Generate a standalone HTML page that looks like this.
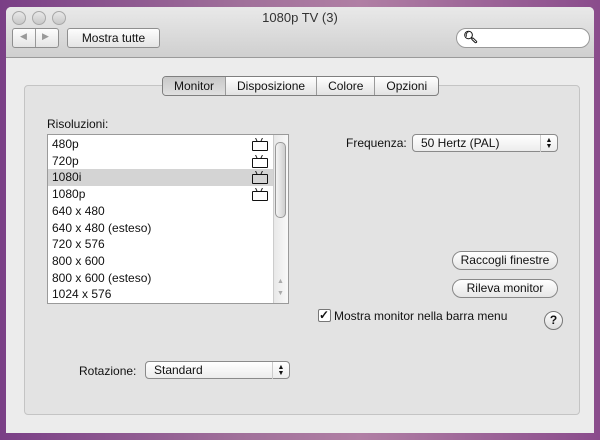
<!DOCTYPE html><html><head><style>
body{margin:0;width:600px;height:440px;overflow:hidden;font-family:"Liberation Sans",sans-serif;font-size:12px;color:#111;background:linear-gradient(90deg,#7a3f86 0%,#a0709a 40%,#b07fa4 60%,#8a4c8c 100%);position:relative}
.a{position:absolute}
.win{left:6px;top:7px;width:588px;height:426px;background:#ececec;border-radius:5px 5px 0 0;overflow:hidden}
.tb{left:0;top:0;width:588px;height:50px;background:linear-gradient(#e9e9e9,#cfcfcf);border-bottom:1px solid #9a9a9a}
.dot{width:12px;height:12px;border-radius:50%;border:1px solid #a8a8a8;background:linear-gradient(#e8e8e8,#c8c8c8);top:4px}
.btn{background:linear-gradient(#fdfdfd,#e4e4e4);border:1px solid #8f8f8f;border-radius:3px;text-align:center}
.pill{background:linear-gradient(#fff,#e6e6e6);border:1px solid #888;border-radius:10px;text-align:center;font-size:12px;line-height:17px}
.box{left:18px;top:78px;width:554px;height:328px;background:#e3e3e3;border:1px solid #c4c4c4;border-radius:4px}
.tabs{left:156px;top:69px;height:18px;border:1px solid #7f7f7f;border-radius:4px;display:flex;background:linear-gradient(#fff,#e2e2e2);overflow:hidden}
.tabs div{padding:0 11px;line-height:18px;border-left:1px solid #9a9a9a;font-size:12px}
.tabs div:first-child{border-left:0;background:linear-gradient(#c8c8c8,#e0e0e0)}
.list{left:22px;top:48px;width:240px;height:168px;background:#fff;border:1px solid #9a9a9a;overflow:hidden}
.row{position:absolute;left:0;width:222px;height:16.7px;line-height:17px;padding-left:4px;font-size:12px}
.tv{position:absolute;left:204px;top:5px;width:14px;height:8px;border:1.5px solid #111;border-radius:1px}
.tv:before{content:"";position:absolute;left:3px;top:-4px;width:2px;height:4px;border-left:1px solid #111;transform:skewX(25deg)}
.tv:after{content:"";position:absolute;left:8px;top:-4px;width:1px;height:4px;border-left:1px solid #111;transform:skewX(-25deg)}
.pop{background:linear-gradient(#fff,#ececec);border:1px solid #8a8a8a;border-radius:4px;height:18px;line-height:17px;font-size:12px;padding-left:8px;box-sizing:border-box}
.arr{position:absolute;right:0;top:0;width:16px;height:14px;border-left:1px solid #ccc;font-size:7px;line-height:6px;text-align:center;padding-top:3px}
</style></head><body>
<div class="a win">
 <div class="a tb">
  <div class="a dot" style="left:6px"></div><div class="a dot" style="left:26px"></div><div class="a dot" style="left:46px"></div>
  <div class="a" style="left:0;width:588px;top:3px;text-align:center;font-size:13px;color:#333">1080p TV (3)</div>
  <div class="a btn" style="left:6px;top:21px;width:45px;height:18px;"><span style="position:absolute;left:7px;top:2px;font-size:9px;color:#999">◀</span><span style="position:absolute;left:22px;top:0;height:18px;border-left:1px solid #999"></span><span style="position:absolute;left:29px;top:2px;font-size:9px;color:#999">▶</span></div>
  <div class="a btn" style="left:61px;top:21px;width:91px;height:18px;line-height:18px;font-size:12px">Mostra tutte</div>
  <div class="a" style="left:450px;top:21px;width:132px;height:18px;background:#fff;border:1px solid #999;border-radius:10px"><span style="position:absolute;left:6px;top:1px;font-size:12px;font-weight:bold">🔍︎</span></div>
 </div>
 <div class="a box">
  <div class="a" style="left:22px;top:31px">Risoluzioni:</div>
  <div class="a list">
   <div class="row" style="top:1px">480p<span class="tv"></span></div>
   <div class="row" style="top:17.7px">720p<span class="tv"></span></div>
   <div class="row" style="top:34.4px;background:#d4d4d4">1080i<span class="tv"></span></div>
   <div class="row" style="top:51.1px">1080p<span class="tv"></span></div>
   <div class="row" style="top:67.8px">640 x 480</div>
   <div class="row" style="top:84.5px">640 x 480 (esteso)</div>
   <div class="row" style="top:101.2px">720 x 576</div>
   <div class="row" style="top:117.9px">800 x 600</div>
   <div class="row" style="top:134.6px">800 x 600 (esteso)</div>
   <div class="row" style="top:151.3px">1024 x 576</div>
   <div class="a" style="left:225px;top:0;width:15px;height:168px;background:linear-gradient(90deg,#e8e8e8,#fafafa);border-left:1px solid #ccc"></div>
   <div class="a" style="left:227px;top:7px;width:9px;height:74px;border:1px solid #999;border-radius:5px;background:linear-gradient(90deg,#f4f4f4,#cfcfcf)"></div>
   <div class="a" style="left:229px;top:143px;font-size:7px;color:#aaa">▲</div><div class="a" style="left:229px;top:155px;font-size:7px;color:#aaa">▼</div>
  </div>
  <div class="a" style="left:321px;top:50px">Frequenza:</div>
  <div class="a pop" style="left:387px;top:48px;width:146px">50 Hertz (PAL)<div class="arr">▲<br>▼</div></div>
  <div class="a pill" style="left:427px;top:165px;width:104px">Raccogli finestre</div>
  <div class="a pill" style="left:427px;top:193px;width:104px">Rileva monitor</div>
  <div class="a" style="left:293px;top:223px;width:11px;height:11px;border:1px solid #777;background:#fff;border-radius:2px;font-size:12px;line-height:11px;font-weight:bold">✓</div>
  <div class="a" style="left:309px;top:223px">Mostra monitor nella barra menu</div>
  <div class="a" style="left:519px;top:225px;width:17px;height:17px;border:1px solid #777;border-radius:50%;background:linear-gradient(#fff,#ddd);text-align:center;line-height:17px;font-weight:bold;font-size:12px">?</div>
  <div class="a" style="left:54px;top:278px">Rotazione:</div>
  <div class="a pop" style="left:120px;top:275px;width:145px">Standard<div class="arr">▲<br>▼</div></div>
 </div>
 <div class="a tabs"><div>Monitor</div><div>Disposizione</div><div>Colore</div><div>Opzioni</div></div>
</div>
</body></html>
